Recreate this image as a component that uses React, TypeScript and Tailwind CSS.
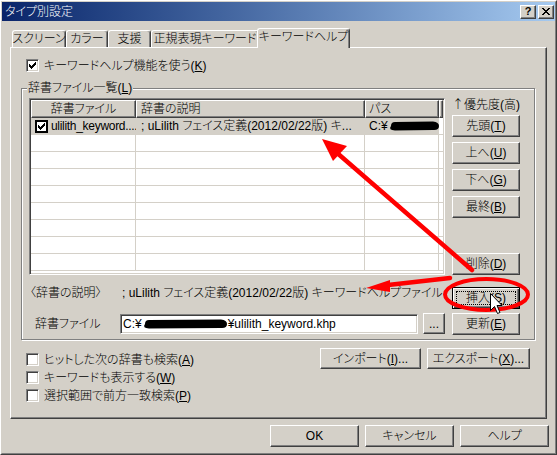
import React from "react";

const raised =
  "border border-t-white border-l-white border-r-[#404040] border-b-[#404040] shadow-[inset_-1px_-1px_0_#808080]";
const sunken =
  "border border-t-[#808080] border-l-[#808080] border-r-white border-b-white shadow-[inset_1px_1px_0_#404040,inset_-1px_-1px_0_#d4d0c8]";

function Check() {
  return (
    <svg width="7" height="7" viewBox="0 0 7 7" shapeRendering="crispEdges">
      <g fill="#000">
        <rect x="6" y="0" width="1" height="1" />
        <rect x="5" y="1" width="2" height="1" />
        <rect x="0" y="2" width="1" height="1" />
        <rect x="4" y="2" width="3" height="1" />
        <rect x="0" y="3" width="2" height="1" />
        <rect x="3" y="3" width="3" height="1" />
        <rect x="0" y="4" width="5" height="1" />
        <rect x="1" y="5" width="3" height="1" />
        <rect x="2" y="6" width="1" height="1" />
      </g>
    </svg>
  );
}

function CheckBox({ checked = false }: { checked?: boolean }) {
  return (
    <span
      className={`flex w-[13px] h-[13px] shrink-0 items-center justify-center bg-white ${sunken}`}
    >
      {checked && <Check />}
    </span>
  );
}

function Btn({
  children,
  className = "",
  def = false,
}: {
  children: React.ReactNode;
  className?: string;
  def?: boolean;
}) {
  return (
    <div
      className={`flex items-center justify-center bg-[#d4d0c8] whitespace-nowrap ${
        def
          ? "relative border border-black shadow-[inset_1px_1px_0_#fff,inset_-1px_-1px_0_#404040,inset_-2px_-2px_0_#808080]"
          : raised
      } ${className}`}
    >
      {def && (
        <span className="absolute top-[3px] left-[3px] right-[3px] bottom-[3px] border border-dotted border-black" />
      )}
      <span>{children}</span>
    </div>
  );
}

function U({ c }: { c: string }) {
  return <span className="underline underline-offset-[1px]">{c}</span>;
}

function Tab({
  children,
  className = "",
}: {
  children: React.ReactNode;
  className?: string;
}) {
  return (
    <div
      className={`h-[17px] flex items-center justify-center rounded-t-[3px] border-t border-l border-t-white border-l-white border-r border-r-[#404040] shadow-[inset_-1px_0_0_#808080] whitespace-nowrap ${className}`}
    >
      {children}
    </div>
  );
}

function Redact({ w, h }: { w: number; h: number }) {
  return (
    <svg width={w} height={h} viewBox={`0 0 ${w} ${h}`} className="shrink-0">
      <path
        d={`M3 ${h / 2} Q3 1 ${h / 2 + 2} 1 L${w - h / 2 - 2} 0.5 Q${w - 1} 1 ${w - 1} ${
          h / 2
        } Q${w - 1} ${h - 0.5} ${w - h / 2 - 2} ${h - 1} L${h / 2 + 2} ${h - 0.5} Q0 ${
          h - 1
        } 3 ${h / 2} Z`}
        fill="#000"
      />
    </svg>
  );
}

const cols = ["w-[105px]", "w-[229px]", "w-[74px]", "flex-1"];

export default function App() {
  return (
    <div className="relative w-[557px] h-[455px] overflow-hidden bg-[#d4d0c8] font-['Liberation_Sans','Noto_Sans_CJK_JP',sans-serif] font-light text-[12px] leading-[14px] text-black [font-feature-settings:'palt']">
      <div className="w-full h-full border border-t-white border-l-white border-r-[#404040] border-b-[#404040]">
        <div className="w-full h-full border border-t-[#d4d0c8] border-l-[#d4d0c8] border-r-[#808080] border-b-[#808080] flex flex-col">
          {/* Title bar */}
          <div className="h-[19px] shrink-0 flex items-center justify-between bg-linear-to-r from-[#0a246a] to-[#a6caf0] pl-[3px] pr-[1px]">
            <span className="text-white">タイプ別設定</span>
            <div className="flex gap-[2px]">
              <div
                className={`w-[16px] h-[14px] flex items-center justify-center bg-[#d4d0c8] ${raised} font-bold text-[11px] leading-[11px]`}
              >
                ?
              </div>
              <div
                className={`w-[16px] h-[14px] flex items-center justify-center bg-[#d4d0c8] ${raised}`}
              >
                <svg width="8" height="7" viewBox="0 0 8 7" shapeRendering="crispEdges">
                  <path d="M0 0h2v1h1v1h2v-1h1v-1h2v1h-1v1h-1v1h-1v1h1v1h1v1h1v1h-2v-1h-1v-1h-2v1h-1v1h-2v-1h1v-1h1v-1h1v-1h-1v-1h-1z" fill="#000" />
                </svg>
              </div>
            </div>
          </div>

          {/* Tabs */}
          <div className="relative z-10 mt-[7px] ml-[8px] h-[19px] flex items-end pl-[2px]">
            <Tab className="w-[54px]">スクリーン</Tab>
            <Tab className="w-[42px]">カラー</Tab>
            <Tab className="w-[43px]">支援</Tab>
            <Tab className="w-[108px]">正規表現キーワード</Tab>
            <div className="relative -ml-[2px] -mb-[1px] w-[93px] h-[20px] pb-[3px] flex items-center justify-center rounded-t-[3px] bg-[#d4d0c8] border-t border-l border-t-white border-l-white border-r border-r-[#404040] shadow-[inset_-1px_0_0_#808080] whitespace-nowrap">
              キーワードヘルプ
            </div>
          </div>

          {/* Panel */}
          <div className="ml-[8px] w-[537px] h-[372px] shrink-0 flex flex-col border border-t-white border-l-white border-r-[#404040] border-b-[#404040] shadow-[inset_-1px_-1px_0_#808080]">
            <div className="mt-[11px] ml-[15px] h-[13px] flex items-center gap-[5px]">
              <CheckBox checked />
              <span>
                キーワードヘルプ機能を使う(<U c="K" />)
              </span>
            </div>

            {/* Group box */}
            <div className="mt-[16px] ml-[10px] w-[514px] h-[252px] flex flex-col border border-[#808080] shadow-[1px_1px_0_#fff,inset_1px_1px_0_#fff]">
              <span className="self-start -mt-[8px] ml-[5px] px-[1px] h-[14px] bg-[#d4d0c8]">
                辞書ファイル一覧(<U c="L" />)
              </span>
              <div className="mt-[3px] ml-[7px] flex gap-[7px]">
                {/* Left column */}
                <div className="w-[416px] flex flex-col">
                  <div className={`h-[177px] p-[1px] bg-white ${sunken}`}>
                    <div className="w-full h-full overflow-hidden flex flex-col">
                      <div className="flex h-[18px] shrink-0">
                        <div className={`${cols[0]} ${raised} bg-[#d4d0c8] flex items-center justify-center`}>
                          辞書ファイル
                        </div>
                        <div className={`${cols[1]} ${raised} bg-[#d4d0c8] flex items-center pl-[4px]`}>
                          辞書の説明
                        </div>
                        <div className={`${cols[2]} ${raised} bg-[#d4d0c8] flex items-center pl-[3px]`}>
                          パス
                        </div>
                        <div className={`${cols[3]} ${raised} bg-[#d4d0c8]`} />
                      </div>
                      {/* Row 1 */}
                      <div className="flex h-[17px] shrink-0 bg-[#d4d0c8] border-b border-[#d4d0c8]">
                        <div className={`${cols[0]} flex items-center pl-[4px] gap-[3px] whitespace-nowrap overflow-hidden`}>
                          <span className="flex w-[13px] h-[13px] shrink-0 items-center justify-center bg-white border-2 border-black">
                            <Check />
                          </span>
                          <span className="tracking-[-0.3px]">ulilith_keyword....</span>
                        </div>
                        <div className={`${cols[1]} flex items-center pl-[5px] whitespace-nowrap overflow-hidden`}>
                          ; uLilith フェイス定義(2012/02/22版) キ...
                        </div>
                        <div className={`${cols[2]} flex items-center pl-[4px] whitespace-nowrap overflow-hidden`}>
                          <span>C:¥</span>
                          <Redact w={52} h={10} />
                        </div>
                        <div className={`${cols[3]} bg-white`} />
                      </div>
                      {Array.from({ length: 8 }).map((_, i) => (
                        <div key={i} className="flex h-[17px] shrink-0 border-b border-[#d4d0c8]">
                          <div className={`${cols[0]} border-r border-[#d4d0c8]`} />
                          <div className={`${cols[1]} border-r border-[#d4d0c8]`} />
                          <div className={`${cols[2]} border-r border-[#d4d0c8]`} />
                          <div className={cols[3]} />
                        </div>
                      ))}
                    </div>
                  </div>

                  <div className="mt-[11px] flex h-[14px] whitespace-nowrap">
                    <span className="w-[91px] pl-[1px] shrink-0">〈辞書の説明〉</span>
                    <span className="pl-[2px]">
                      ; uLilith フェイス定義(2012/02/22版) キーワードヘルプファイル
                    </span>
                  </div>

                  <div className="mt-[13px] flex items-center h-[21px]">
                    <span className="w-[91px] pl-[6px] shrink-0">辞書ファイル</span>
                    <div className={`w-[298px] h-[20px] bg-white flex items-center pl-[2px] whitespace-nowrap overflow-hidden ${sunken}`}>
                      <span>C:¥</span>
                      <Redact w={86} h={10} />
                      <span>¥ulilith_keyword.khp</span>
                    </div>
                    <Btn className="ml-[5px] w-[22px] h-[21px]">...</Btn>
                  </div>
                </div>

                {/* Right column */}
                <div className="w-[68px] flex flex-col">
                  <span className="-mt-[1px] h-[14px] whitespace-nowrap">
                    <span className="font-['Noto_Sans_CJK_JP',sans-serif]">↑</span>優先度(高)
                  </span>
                  <Btn className="mt-[4px] h-[22px]">
                    先頭(<U c="T" />)
                  </Btn>
                  <Btn className="mt-[5px] h-[22px]">
                    上へ(<U c="U" />)
                  </Btn>
                  <Btn className="mt-[5px] h-[22px]">
                    下へ(<U c="G" />)
                  </Btn>
                  <Btn className="mt-[5px] h-[22px]">
                    最終(<U c="B" />)
                  </Btn>
                  <Btn className="mt-[35px] h-[22px]">
                    削除(<U c="D" />)
                  </Btn>
                  <Btn def className="mt-[12px] h-[22px]">
                    挿入(<U c="S" />)
                  </Btn>
                  <Btn className="mt-[4px] h-[22px]">
                    更新(<U c="E" />)
                  </Btn>
                </div>
              </div>
            </div>

            {/* Bottom of panel */}
            <div className="mt-[8px] flex">
              <div className="ml-[15px] w-[294px] pt-[5px] flex flex-col gap-[5px]">
                <div className="h-[13px] flex items-center gap-[5px]">
                  <CheckBox />
                  <span>
                    ヒットした次の辞書も検索(<U c="A" />)
                  </span>
                </div>
                <div className="h-[13px] flex items-center gap-[5px]">
                  <CheckBox />
                  <span>
                    キーワードも表示する(<U c="W" />)
                  </span>
                </div>
                <div className="h-[13px] flex items-center gap-[5px]">
                  <CheckBox />
                  <span>
                    選択範囲で前方一致検索(<U c="P" />)
                  </span>
                </div>
              </div>
              <div className="flex gap-[6px]">
                <Btn className="w-[101px] h-[21px]">
                  インポート(<U c="I" />)...
                </Btn>
                <Btn className="w-[103px] h-[21px]">
                  エクスポート(<U c="X" />)...
                </Btn>
              </div>
            </div>
          </div>

          {/* Dialog buttons */}
          <div className="mt-[6px] flex justify-end gap-[6px] pr-[6px]">
            <Btn className="w-[89px] h-[22px]">OK</Btn>
            <Btn className="w-[89px] h-[22px]">キャンセル</Btn>
            <Btn className="w-[89px] h-[22px]">ヘルプ</Btn>
          </div>
        </div>
      </div>

      {/* Red annotations + cursor overlay */}
      <svg
        className="absolute left-0 top-0 pointer-events-none"
        width="557"
        height="455"
        viewBox="0 0 557 455"
      >
        <line x1="472" y1="270" x2="336" y2="152" stroke="#ff0000" strokeWidth="4.5" strokeLinecap="round" />
        <polygon points="322,139 347,146 333,161" fill="#ff0000" />
        <path d="M450 278 L388 285" stroke="#ff0000" strokeWidth="4.5" strokeLinecap="round" fill="none" />
        <polygon points="366,288 390,280 390,292" fill="#ff0000" />
        <ellipse cx="486.5" cy="294.5" rx="41.5" ry="15.5" stroke="#ff0000" strokeWidth="4" fill="none" />
        <path
          d="M490.5 293.5 L490.5 310.5 L494.5 306.5 L497.5 313.5 L500 312.5 L497 305.5 L502 305.5 Z"
          fill="#fff"
          stroke="#000"
          strokeWidth="1"
          strokeLinejoin="miter"
        />
      </svg>
    </div>
  );
}
